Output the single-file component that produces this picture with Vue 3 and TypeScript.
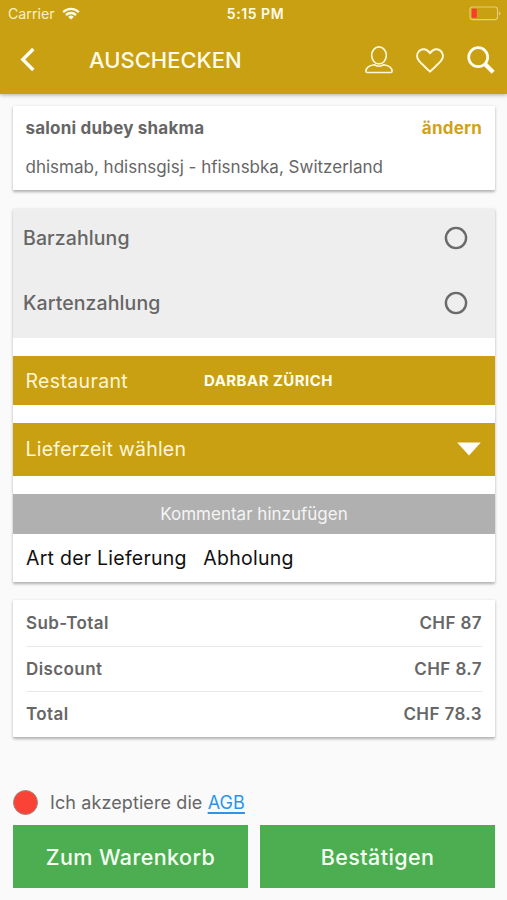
<script setup lang="ts">
interface Line {
  label: string
  amount: string
}

const payments: string[] = ['Barzahlung', 'Kartenzahlung']
const totals: Line[] = [
  { label: 'Sub-Total', amount: 'CHF 87' },
  { label: 'Discount', amount: 'CHF 8.7' },
  { label: 'Total', amount: 'CHF 78.3' },
]
</script>

<template>
  <div class="screen">
    <header class="header">
      <div class="status">
        <div class="carrier">
          <span>Carrier</span>
          <svg class="wifi" viewBox="0 0 18 13" width="18" height="13">
            <g fill="none" stroke="#fffbea" stroke-width="2.3">
              <path d="M1.2 5.2a11 11 0 0 1 15.6 0" />
              <path d="M4 8.1a7 7 0 0 1 10 0" />
            </g>
            <path d="M9 12.6 6.2 9.9a4 4 0 0 1 5.6 0z" fill="#fffbea" />
          </svg>
        </div>
        <span class="time">5:15 PM</span>
        <svg class="battery" viewBox="0 0 33 15" width="33" height="15">
          <rect x="1" y="1" width="27.5" height="12.6" rx="2.6" fill="none" stroke="#e6ce7c" stroke-width="1.1" />
          <rect x="2.8" y="2.8" width="5" height="9" rx="0.8" fill="#fb3b30" />
          <path d="M30 5.2c2 .8 2 3.4 0 4.2z" fill="#e6ce7c" />
        </svg>
      </div>
      <div class="bar">
        <svg class="back" viewBox="0 0 16 26" width="16" height="26">
          <path d="M13.3 2 2.8 12.5 13.3 23" fill="none" stroke="#fffdf4" stroke-width="3.4" />
        </svg>
        <h1 class="title">AUSCHECKEN</h1>
        <div class="actions">
          <svg viewBox="0 0 28 28" width="28" height="28">
            <g fill="none" stroke="#fff8dc" stroke-width="1.6" stroke-linejoin="round">
              <ellipse cx="14" cy="9.4" rx="7.3" ry="8.5" />
              <path d="M9.2 18.7C4.5 19.4 1 21.2.9 25.2c0 .9.5 1.3 1.3 1.3h23.6c.8 0 1.300-.4 1.300-1.300-.1-4-3.600-5.800-8.300-6.500-2.600 2.100-7 2.100-9.600 0z" />
            </g>
          </svg>
          <svg viewBox="0 0 28 25" width="28" height="25">
            <path d="M14 23.700C10.500 20 5.700 16.300 2.900 12.700 1 10.300.6 7 2.100 4.400 3.600 1.900 6.200.9 8.500 1.300c2.500.4 4.200 1.900 5.500 4 1.300-2.100 3-3.600 5.500-4 2.300-.4 4.900.6 6.400 3.100 1.500 2.600 1.100 5.900-.8 8.300C22.300 16.300 17.500 20 14 23.700z" fill="none" stroke="#fff8dc" stroke-width="1.900" stroke-linejoin="round" />
          </svg>
          <svg viewBox="0 0 28 28" width="28" height="28">
            <circle cx="11.200" cy="11.200" r="9.500" fill="none" stroke="#fffdf4" stroke-width="2.700" />
            <path d="m18 18 8.200 8.200" stroke="#fffdf4" stroke-width="4.200" />
          </svg>
        </div>
      </div>
    </header>

    <main class="content">
      <section class="card address">
        <div class="row">
          <span class="name">saloni dubey shakma</span>
          <span class="change">ändern</span>
        </div>
        <p class="street">dhismab, hdisnsgisj - hfisnsbka, Switzerland</p>
      </section>

      <section class="card order">
        <div class="payments">
          <div v-for="p in payments" :key="p" class="payment">
            <span>{{ p }}</span>
            <svg viewBox="0 0 24 24" width="24" height="24">
              <circle cx="12" cy="12" r="10.100" fill="none" stroke="#6a6a6a" stroke-width="2.400" />
            </svg>
          </div>
        </div>
        <div class="strip restaurant">
          <span class="strip-label">Restaurant</span>
          <span class="place">DARBAR ZÜRICH</span>
        </div>
        <div class="strip delivery">
          <span class="when">Lieferzeit wählen</span>
          <svg viewBox="0 0 24 14" width="24" height="14">
            <path d="M.2.4h23.600L12 13.400z" fill="#fffef8" />
          </svg>
        </div>
        <div class="comment"><span>Kommentar hinzufügen</span></div>
        <div class="kind">
          <span class="kind-label">Art der Lieferung</span>
          <span class="kind-value">Abholung</span>
        </div>
      </section>

      <section class="card totals">
        <div v-for="t in totals" :key="t.label" class="total">
          <span>{{ t.label }}</span>
          <span>{{ t.amount }}</span>
        </div>
      </section>

      <div class="terms">
        <i class="dot"></i>
        <span>Ich akzeptiere die <a class="agb">AGB</a></span>
      </div>
      <div class="buttons">
        <button class="btn cart">Zum Warenkorb</button>
        <button class="btn confirm">Bestätigen</button>
      </div>
    </main>
  </div>
</template>

<style>
body {
  background: #fafafa;
}
</style>

<style scoped>
* {
  box-sizing: border-box;
}
.screen {
  height: 900px;
  overflow: hidden;
  background: #fafafa;
  color: #666;
  font-family: Inter, 'Liberation Sans', sans-serif;
  white-space: nowrap;
}
.header {
  height: 94px;
  background: #c9a011;
  color: #fffbea;
  box-shadow: 0 1px 4px rgba(0, 0, 0, 0.32);
}
.status {
  display: grid;
  grid-template-columns: 1fr auto 1fr;
  align-items: center;
  height: 27px;
  padding: 0 5px 0 8px;
  font-size: 14.2px;
}
.carrier {
  display: flex;
  align-items: center;
  gap: 7px;
  color: #fbf0c6;
}
.time {
  padding-left: 1px;
  font-size: 14px;
  font-weight: 600;
  letter-spacing: 0.55px;
}
.battery {
  justify-self: end;
}
.bar {
  display: flex;
  align-items: center;
  height: 66px;
  padding: 0 12px 0 20px;
}
.title {
  margin: 0 0 0 53px;
  font-size: 22px;
  font-weight: 500;
  letter-spacing: 0;
}
.actions {
  display: flex;
  align-items: center;
  gap: 23px;
  margin-left: auto;
}
.content {
  padding: 12px 12px 0 13px;
}
.card {
  background: #fff;
  border-radius: 1px;
  box-shadow: 0 1.5px 3px rgba(0, 0, 0, 0.3);
}
.address {
  height: 84px;
  padding: 11px 13px 0 12.5px;
}
.row {
  display: flex;
  justify-content: space-between;
  font-size: 17px;
  font-weight: 700;
  line-height: 22px;
  letter-spacing: 0.2px;
}
.change {
  color: #cfa21a;
}
.street {
  margin: 17px 0 0;
  font-size: 17px;
  line-height: 22px;
}
.order {
  height: 373px;
  margin-top: 19px;
}
.payments {
  height: 129px;
  background: #eee;
}
.payment {
  display: flex;
  align-items: center;
  justify-content: space-between;
  height: 64.5px;
  padding: 0 27px 6px 10px;
  font-size: 19.5px;
  font-weight: 500;
  letter-spacing: 0.1px;
}
.strip {
  display: flex;
  align-items: center;
  padding: 0 14px 0 12.5px;
  background: #c9a011;
  color: #fff6d8;
  font-size: 19.5px;
}
.restaurant {
  height: 48.6px;
  margin-top: 18.4px;
  letter-spacing: 0.35px;
}
.strip-label {
  width: 178.5px;
}
.place {
  color: #fffdf0;
  font-size: 15px;
  font-weight: 700;
  letter-spacing: 0.45px;
}
.delivery {
  height: 52.2px;
  margin-top: 18.4px;
  justify-content: space-between;
  letter-spacing: 0.22px;
}
.comment {
  display: flex;
  align-items: center;
  justify-content: center;
  height: 40px;
  margin-top: 18.5px;
  background: #b0b0b0;
  color: #f5f5f5;
  font-size: 17px;
}
.kind {
  display: flex;
  align-items: center;
  gap: 16.5px;
  height: 48px;
  padding-left: 13px;
  color: #111;
  font-size: 19.5px;
  letter-spacing: 0.25px;
}
.totals {
  height: 137px;
  margin-top: 18px;
  padding: 0 13px;
}
.total {
  display: flex;
  align-items: center;
  justify-content: space-between;
  height: 45.5px;
  font-size: 17px;
  font-weight: 600;
  letter-spacing: 0.4px;
}
.total + .total {
  border-top: 1px solid #e8e8e8;
}
.terms {
  display: flex;
  align-items: center;
  gap: 12px;
  height: 26px;
  margin-top: 52px;
  font-size: 18px;
  letter-spacing: 0.1px;
}
.dot {
  width: 25px;
  height: 25px;
  border: 1px solid #a08a80;
  border-radius: 50%;
  background: #fa4236;
}
.agb {
  color: #2b95ee;
  text-decoration: underline;
  text-decoration-thickness: 1.5px;
  text-underline-offset: 3px;
}
.buttons {
  display: grid;
  grid-template-columns: 1fr 1fr;
  gap: 12px;
  margin-top: 10px;
}
.btn {
  height: 63px;
  padding: 0;
  border: 0;
  background: #4cae50;
  color: #f6fff4;
  font: 500 21.5px Inter, 'Liberation Sans', sans-serif;
  letter-spacing: 0.4px;
}
</style>
